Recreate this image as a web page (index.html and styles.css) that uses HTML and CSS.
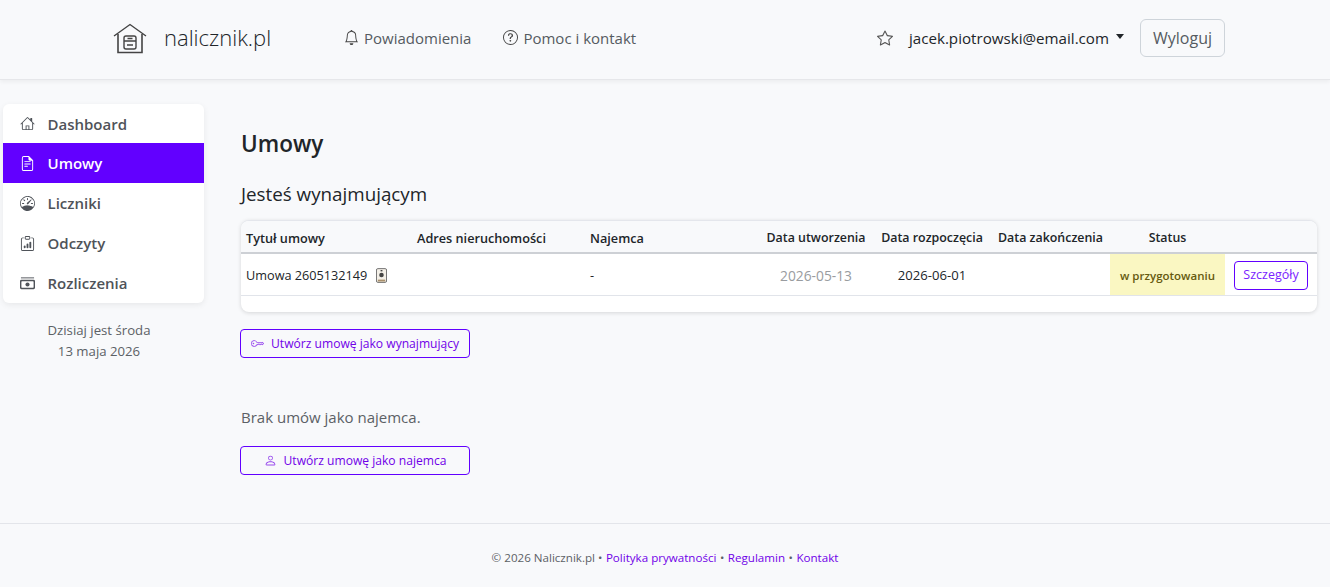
FILE: index.html
```html
<!DOCTYPE html>
<html lang="pl">
<head>
    <meta charset="utf-8">
    <title>Umowy - nalicznik.pl</title>
    <link rel="stylesheet" href="styles.css">
</head>
<body>
    <header class="topbar">
        <a class="brand" href="#">
            <svg class="brand-icon" viewBox="0 0 34 32" fill="none" stroke="#444" stroke-width="1.4">
                <path d="M1 13 17 1.500 33 13"/>
                <path d="M5 11v18.500h24V11" stroke-width="1.6"/>
                <rect x="11" y="13" width="12" height="13" rx="2"/>
                <path d="M11 18h12M14.500 15.500h5M14 22h6"/>
            </svg>
            <span>nalicznik.pl</span>
        </a>
        <nav class="topnav">
            <a href="#">
                <svg class="ico" viewBox="0 0 16 16" fill="#444"><path d="M8 16a2 2 0 0 0 2-2H6a2 2 0 0 0 2 2zM8 1.918l-.797.161A4.002 4.002 0 0 0 4 6c0 .628-.134 2.197-.459 3.742-.16.767-.376 1.566-.663 2.258h10.244c-.287-.692-.502-1.490-.663-2.258C12.134 8.197 12 6.628 12 6a4.002 4.002 0 0 0-3.203-3.920L8 1.917zM14.220 12c.223.447.481.801.780 1H1c.299-.199.557-.553.780-1C2.680 10.200 3 6.880 3 6c0-2.420 1.720-4.440 4.005-4.901a1 1 0 1 1 1.990 0A5.002 5.002 0 0 1 13 6c0 .88.320 4.200 1.220 6z"/></svg>
                Powiadomienia
            </a>
            <a href="#">
                <svg class="ico" viewBox="0 0 16 16" fill="#444"><path d="M8 15A7 7 0 1 1 8 1a7 7 0 0 1 0 14zm0 1A8 8 0 1 0 8 0a8 8 0 0 0 0 16z"/><path d="M5.255 5.786a.237.237 0 0 0 .241.247h.825c.138 0 .248-.113.266-.250.090-.656.540-1.134 1.342-1.134.686 0 1.314.343 1.314 1.168 0 .635-.374.927-.965 1.371-.673.489-1.206 1.060-1.168 1.987l.003.217a.25.25 0 0 0 .25.246h.811a.25.25 0 0 0 .25-.25v-.105c0-.718.273-.927 1.010-1.486.609-.463 1.244-.977 1.244-2.056 0-1.511-1.276-2.241-2.673-2.241-1.267 0-2.655.590-2.750 2.286zm1.557 5.763c0 .533.425.927 1.010.927.609 0 1.028-.394 1.028-.927 0-.552-.420-.940-1.029-.940-.584 0-1.009.388-1.009.940z"/></svg>
                Pomoc i kontakt
            </a>
        </nav>
        <div class="usernav">
            <svg class="star" viewBox="0 0 16 16" fill="#555"><path d="M2.866 14.850c-.078.444.360.791.746.593l4.390-2.256 4.389 2.256c.386.198.824-.149.746-.592l-.830-4.730 3.522-3.356c.330-.314.160-.888-.282-.950l-4.898-.696L8.465.792a.513.513 0 0 0-.927 0L5.354 5.120l-4.898.696c-.441.062-.612.636-.283.950l3.523 3.356-.830 4.730zm4.905-2.767-3.686 1.894.694-3.957a.565.565 0 0 0-.163-.505L1.710 6.745l4.052-.576a.525.525 0 0 0 .393-.288L8 2.223l1.847 3.658a.525.525 0 0 0 .393.288l4.052.575-2.906 2.770a.565.565 0 0 0-.163.506l.694 3.957-3.686-1.894a.503.503 0 0 0-.461 0z"/></svg>
            <a class="usermail" href="#">jacek.piotrowski@email.com<i class="caret"></i></a>
            <a class="logout" href="#">Wyloguj</a>
        </div>
    </header>

    <div class="layout">
        <aside class="side">
            <ul class="menu">
                <li><a href="#">
                    <svg class="ico-side" viewBox="0 0 16 16" fill="currentColor"><path d="M8.707 1.500a1 1 0 0 0-1.414 0L.646 8.146a.5.5 0 0 0 .708.708L2 8.207V13.500A1.500 1.500 0 0 0 3.500 15h9a1.500 1.500 0 0 0 1.500-1.500V8.207l.646.647a.5.5 0 0 0 .708-.708L13 5.793V2.500a.5.500 0 0 0-.5-.5h-1a.5.5 0 0 0-.5.5v1.293L8.707 1.500zM13 7.207V13.500a.5.5 0 0 1-.5.5h-9a.5.5 0 0 1-.5-.5V7.207l5-5 5 5z"/><path d="M6 15V10h4v5h-1v-4H7v4z"/></svg>
                    Dashboard</a></li>
                <li class="active"><a href="#">
                    <svg class="ico-side" viewBox="0 0 16 16" fill="currentColor"><path d="M5 4a.5.5 0 0 0 0 1h6a.5.5 0 0 0 0-1H5zM5 6.500a.5.5 0 0 0 0 1h6a.5.5 0 0 0 0-1H5zM5 9a.5.5 0 0 0 0 1h3a.5.5 0 0 0 0-1H5z" transform="translate(0 1.500)"/><path d="M2 2a2 2 0 0 1 2-2h5.500L14 4.500V14a2 2 0 0 1-2 2H4a2 2 0 0 1-2-2V2zm7-1H4a1 1 0 0 0-1 1v12a1 1 0 0 0 1 1h8a1 1 0 0 0 1-1V5h-2.500A1.500 1.500 0 0 1 9 3.500V1z"/></svg>
                    Umowy</a></li>
                <li><a href="#">
                    <svg class="ico-side" viewBox="0 0 16 16" fill="currentColor"><path d="M8 2a.5.5 0 0 1 .5.5V4a.5.5 0 0 1-1 0V2.500A.5.5 0 0 1 8 2zM3.732 3.732a.5.5 0 0 1 .707 0l.915.914a.5.5 0 1 1-.708.708l-.914-.915a.5.5 0 0 1 0-.707zM2 8a.5.5 0 0 1 .5-.5h1.586a.5.5 0 0 1 0 1H2.500A.5.5 0 0 1 2 8zm9.500 0a.5.5 0 0 1 .5-.5h1.500a.5.5 0 0 1 0 1H12a.5.5 0 0 1-.5-.5zm.754-4.246a.389.389 0 0 0-.527-.020L7.547 7.310A.91.91 0 1 0 8.850 8.569l3.434-4.297a.389.389 0 0 0-.029-.518z"/><path fill-rule="evenodd" d="M6.664 15.889A8 8 0 1 1 9.336.110a8 8 0 0 1-2.672 15.780zm-4.665-4.283A11.945 11.945 0 0 1 8 10c2.186 0 4.236.585 6.001 1.606a7 7 0 1 0-12.002 0z"/></svg>
                    Liczniki</a></li>
                <li><a href="#">
                    <svg class="ico-side" viewBox="0 0 16 16" fill="currentColor"><path d="M4 11a1 1 0 1 1 2 0v1a1 1 0 1 1-2 0v-1zm6-4a1 1 0 1 1 2 0v5a1 1 0 1 1-2 0V7zM7 9a1 1 0 0 1 2 0v3a1 1 0 1 1-2 0V9z"/><path d="M4 1.500H3a2 2 0 0 0-2 2V14a2 2 0 0 0 2 2h10a2 2 0 0 0 2-2V3.500a2 2 0 0 0-2-2h-1v1h1a1 1 0 0 1 1 1V14a1 1 0 0 1-1 1H3a1 1 0 0 1-1-1V3.500a1 1 0 0 1 1-1h1v-1z"/><path d="M9.500 1a.5.5 0 0 1 .5.5v1a.5.5 0 0 1-.5.5h-3a.5.5 0 0 1-.5-.5v-1a.5.5 0 0 1 .5-.5h3zm-3-1A1.500 1.500 0 0 0 5 1.500v1A1.500 1.500 0 0 0 6.500 4h3A1.500 1.500 0 0 0 11 2.500v-1A1.500 1.500 0 0 0 9.500 0h-3z"/></svg>
                    Odczyty</a></li>
                <li><a href="#">
                    <svg class="ico-side" viewBox="0 0 16 16" fill="currentColor"><rect x="1" y="1.500" width="14" height="1"/><path fill-rule="evenodd" d="M1.500 4h13A1.500 1.500 0 0 1 16 5.500v7a1.500 1.500 0 0 1-1.500 1.500h-13A1.500 1.500 0 0 1 0 12.500v-7A1.500 1.500 0 0 1 1.500 4zm.5 1.500a.5.5 0 0 0-.5.5v6a.5.5 0 0 0 .5.5h12a.5.5 0 0 0 .5-.5V6a.5.5 0 0 0-.5-.5H2z"/><circle cx="8" cy="9" r="2.200"/></svg>
                    Rozliczenia</a></li>
            </ul>
            <p class="today">Dzisiaj jest środa<br>13 maja 2026</p>
        </aside>

        <main class="content">
            <h1>Umowy</h1>
            <h2>Jesteś wynajmującym</h2>

            <div class="table-card">
                <table class="contracts">
                    <colgroup>
                        <col class="c-title"><col class="c-addr"><col class="c-tenant"><col class="c-date"><col class="c-date2"><col class="c-date3"><col class="c-status"><col>
                    </colgroup>
                    <thead>
                        <tr>
                            <th>Tytuł umowy</th>
                            <th>Adres nieruchomości</th>
                            <th>Najemca</th>
                            <th class="center">Data utworzenia</th>
                            <th class="center">Data rozpoczęcia</th>
                            <th class="center">Data zakończenia</th>
                            <th class="center">Status</th>
                            <th></th>
                        </tr>
                    </thead>
                    <tbody>
                        <tr>
                            <td>Umowa 2605132149
                                <svg class="doc-ico" viewBox="0 0 12 16"><rect x=".5" y=".5" width="11" height="15" rx="1.500" fill="#f4f0e8" stroke="#666"/><rect x="2" y="12.500" width="8" height="2" fill="#a98f6a"/><circle cx="6" cy="7.500" r="2.500" fill="#444"/><rect x="5" y="2" width="2" height="1.500" fill="#444"/></svg>
                            </td>
                            <td></td>
                            <td>-</td>
                            <td class="center muted">2026-05-13</td>
                            <td class="center date">2026-06-01</td>
                            <td></td>
                            <td class="center status"><span>w przygotowaniu</span></td>
                            <td class="center"><a class="btn-small" href="#">Szczegóły</a></td>
                        </tr>
                    </tbody>
                </table>
            </div>

            <a class="btn-wide" href="#">
                <svg class="btn-ico" viewBox="0 0 16 16" fill="currentColor"><path d="M0 8a4 4 0 0 1 7.465-2H14a.5.5 0 0 1 .354.146l1.500 1.500a.5.5 0 0 1 0 .708l-1.500 1.500a.5.5 0 0 1-.708 0L13 9.207l-.646.647a.5.5 0 0 1-.708 0L11 9.207l-.646.647a.5.5 0 0 1-.708 0L9 9.207l-.646.647A.5.5 0 0 1 8 10h-.535A4 4 0 0 1 0 8zm4-3a3 3 0 1 0 2.712 4.285A.5.5 0 0 1 7.163 9h.63l.853-.854a.5.5 0 0 1 .708 0l.646.647.646-.647a.5.5 0 0 1 .708 0l.646.647.646-.647a.5.5 0 0 1 .708 0l.646.647.793-.793-1-1h-6.630a.5.5 0 0 1-.451-.285A3 3 0 0 0 4 5z"/><path d="M4 8a1 1 0 1 1-2 0 1 1 0 0 1 2 0z"/></svg>
                Utwórz umowę jako wynajmujący
            </a>

            <p class="empty">Brak umów jako najemca.</p>

            <a class="btn-wide btn-center" href="#">
                <svg class="btn-ico" viewBox="0 0 16 16" fill="currentColor"><path d="M8 8a3 3 0 1 0 0-6 3 3 0 0 0 0 6zm2-3a2 2 0 1 1-4 0 2 2 0 0 1 4 0zm4 8c0 1-1 1-1 1H3s-1 0-1-1 1-4 6-4 6 3 6 4zm-1-.004c-.001-.246-.154-.986-.832-1.664C11.516 10.680 10.289 10 8 10c-2.290 0-3.516.680-4.168 1.332-.678.678-.830 1.418-.832 1.664h10z"/></svg>
                Utwórz umowę jako najemca
            </a>
        </main>
    </div>

    <footer class="foot">
        © 2026 Nalicznik.pl • <a href="#">Polityka prywatności</a> • <a href="#">Regulamin</a> • <a href="#">Kontakt</a>
    </footer>
</body>
</html>
```

FILE: styles.css
```css
* {
    box-sizing: border-box;
}
html, body {
    margin: 0;
    height: 100%;
}
body {
    background-color: #f8f9fb;
    color: #212529;
    font-family: "Open Sans", "Noto Sans", sans-serif;
    font-size: 15px;
    display: flex;
    flex-direction: column;
    min-height: 587px;
}
a {
    text-decoration: none;
    color: inherit;
}

/* gorny pasek */
.topbar {
    height: 80px;
    flex: none;
    display: flex;
    align-items: center;
    padding: 0 105px 4px 113px;
    border-bottom: 1px solid #e6e7ea;
    box-shadow: 0 2px 4px rgba(0, 0, 0, .05);
}
.brand {
    display: flex;
    align-items: center;
    font-size: 22px;
    font-weight: 300;
    color: #212529;
    width: 231px;
}
.brand span {
    padding-bottom: 2px;
}
.brand-icon {
    width: 34px;
    height: 32px;
    margin: 2px 17px 0 0;
}
.topnav {
    display: flex;
    gap: 32px;
    color: #555b61;
}
.topnav a {
    display: flex;
    align-items: center;
    gap: 5px;
}
.ico {
    width: 15px;
    height: 15px;
}
.usernav {
    margin-left: auto;
    display: flex;
    align-items: center;
}
.star {
    width: 16px;
    height: 16px;
    margin-right: 16px;
}
.usermail {
    display: flex;
    align-items: center;
    margin-right: 16px;
    font-size: 15.150px;
}
.caret {
    margin-left: 7px;
    border-top: 5px solid #212529;
    border-left: 4.500px solid transparent;
    border-right: 4.500px solid transparent;
    margin-bottom: 3px;
}
.logout {
    height: 38px;
    padding: 0 12px;
    display: flex;
    align-items: center;
    border: 1px solid #ced4da;
    border-radius: 6px;
    color: #555b61;
    font-size: 16px;
}

/* uklad strony */
.layout {
    flex: 1;
    display: flex;
    padding: 24px 13px 0 3px;
}
.side {
    width: 201px;
    flex: none;
    margin-right: 36px;
}
.menu {
    list-style: none;
    margin: 0;
    padding: 0;
    background: #fff;
    border-radius: 6px;
    box-shadow: 0 2px 6px rgba(0, 0, 0, .07);
    overflow: hidden;
}
.menu li a {
    height: 40px;
    display: flex;
    align-items: center;
    padding-left: 17px;
    font-weight: 600;
    color: #4f5359;
}
.menu li:first-child a {
    height: 39px;
}
.menu li.active a {
    background-color: #6200ff;
    color: #fff;
}
.ico-side {
    width: 15px;
    height: 15px;
    margin-right: 12.500px;
}
.today {
    margin: 17px 0 0;
    padding-right: 9px;
    text-align: center;
    color: #5c6166;
    font-size: 13.200px;
    line-height: 21px;
}

/* tresc */
.content {
    flex: 1;
    min-width: 0;
}
h1 {
    margin: 24px 0 0 1px;
    font-size: 22.500px;
    font-weight: 600;
    line-height: 32px;
}
h2 {
    margin: 21px 0 0 1px;
    font-size: 18.800px;
    font-weight: 400;
    line-height: 26px;
}
.table-card {
    margin: 13px 0 0 1px;
    height: 92px;
    background: #fff;
    border-top: 1px solid #e4e6ec;
    border-radius: 8px;
    box-shadow: 0 1px 4px rgba(0, 0, 0, .14);
    overflow: hidden;
}
.contracts {
    width: 100%;
    border-collapse: collapse;
    table-layout: fixed;
    font-size: 12.700px;
}
.c-title { width: 171px; }
.c-addr { width: 173px; }
.c-tenant { width: 174px; }
.c-date { width: 114px; }
.c-date2 { width: 118px; }
.c-date3 { width: 119px; }
.c-status { width: 115px; }
.contracts th {
    height: 32px;
    padding: 2px 5px 0;
    text-align: left;
    font-weight: 600;
    white-space: nowrap;
    background: #f8f9fb;
    border-bottom: 2px solid #cdd0d5;
    color: #212529;
}
.contracts th.center {
    font-size: 12.400px;
}
.contracts td {
    height: 42px;
    padding: 2px 5px 0;
    border-bottom: 1px solid #e1e4ea;
    white-space: nowrap;
    color: #212529;
}
.contracts .center {
    text-align: center;
}
.contracts .muted {
    color: #999ca0;
    font-size: 13.800px;
}
.contracts .date {
    font-size: 13.100px;
}
.doc-ico {
    width: 11px;
    height: 15px;
    margin-left: 5px;
    vertical-align: -3px;
}
.contracts .status {
    background: #faf7c2;
    font-size: 11.500px;
    font-weight: 600;
    color: #665a10;
}
.btn-small {
    display: inline-block;
    height: 29px;
    line-height: 26px;
    padding: 0 8.500px;
    border: 1px solid #6200ff;
    border-radius: 4px;
    color: #7a22ff;
    font-size: 12.500px;
}
.btn-wide {
    display: flex;
    align-items: center;
    width: 230px;
    height: 29px;
    padding-left: 10px;
    margin-top: 17px;
    border: 1px solid #6200ff;
    border-radius: 4px;
    color: #7000e8;
    font-size: 12.100px;
    white-space: nowrap;
}
.btn-center {
    justify-content: center;
    padding-left: 0;
    margin-top: 18px;
}
.btn-ico {
    width: 13px;
    height: 13px;
    margin-right: 7px;
    opacity: .7;
}
.empty {
    margin: 49px 0 0 1px;
    font-size: 15px;
    line-height: 21px;
    color: #5c6166;
}

/* stopka */
.foot {
    height: 64px;
    flex: none;
    border-top: 1px solid #e3e5ea;
    padding-top: 4px;
    display: flex;
    justify-content: center;
    align-items: center;
    gap: 3.500px;
    font-size: 11.600px;
    color: #5c6166;
}
.foot a {
    color: #7000e8;
}
```
